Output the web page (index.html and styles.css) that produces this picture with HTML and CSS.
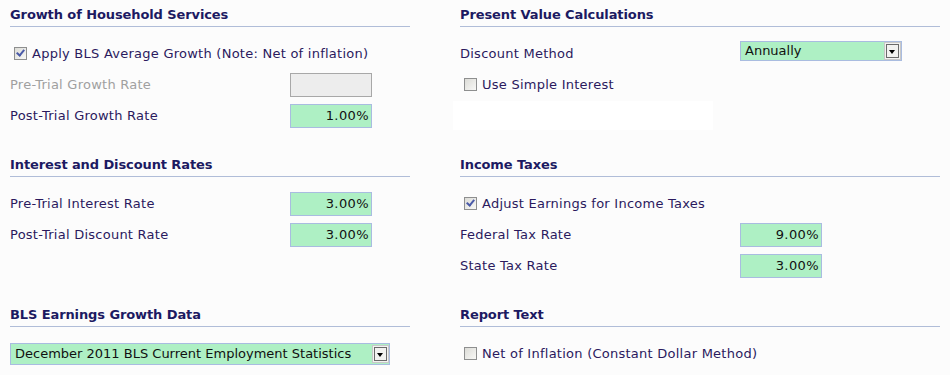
FILE: index.html
```html
<!DOCTYPE html>
<html lang="en">
  <head>
    <meta charset="UTF-8" />
    <meta name="viewport" content="width=device-width, initial-scale=1.0" />
    <title>Assumptions</title>
    <link rel="stylesheet" href="styles.css">
  </head>
  <body>
    <div class="page">
      <div class="section">
        <h2>Growth of Household Services</h2>
        <div class="row">
          <label class="check"><span class="box checked"></span>Apply BLS Average Growth (Note: Net of inflation)</label>
        </div>
        <div class="row">
          <span class="label disabled">Pre-Trial Growth Rate</span>
          <div class="field off"></div>
        </div>
        <div class="row">
          <span class="label">Post-Trial Growth Rate</span>
          <div class="field">1.00%</div>
        </div>
      </div>

      <div class="section">
        <h2>Present Value Calculations</h2>
        <div class="row">
          <span class="label">Discount Method</span>
          <div class="select small"><span class="value">Annually</span><span class="arrow"></span></div>
        </div>
        <div class="row">
          <label class="check"><span class="box"></span>Use Simple Interest</label>
        </div>
        <div class="row">
          <div class="blank"></div>
        </div>
      </div>

      <div class="section">
        <h2>Interest and Discount Rates</h2>
        <div class="row">
          <span class="label">Pre-Trial Interest Rate</span>
          <div class="field">3.00%</div>
        </div>
        <div class="row">
          <span class="label">Post-Trial Discount Rate</span>
          <div class="field">3.00%</div>
        </div>
      </div>

      <div class="section">
        <h2>Income Taxes</h2>
        <div class="row">
          <label class="check"><span class="box checked"></span>Adjust Earnings for Income Taxes</label>
        </div>
        <div class="row">
          <span class="label">Federal Tax Rate</span>
          <div class="field">9.00%</div>
        </div>
        <div class="row">
          <span class="label">State Tax Rate</span>
          <div class="field">3.00%</div>
        </div>
      </div>

      <div class="section last">
        <h2>BLS Earnings Growth Data</h2>
        <div class="row">
          <div class="select wide"><span class="value">December 2011 BLS Current Employment Statistics</span><span class="arrow"></span></div>
        </div>
      </div>

      <div class="section last">
        <h2>Report Text</h2>
        <div class="row">
          <label class="check"><span class="box"></span>Net of Inflation (Constant Dollar Method)</label>
        </div>
      </div>
    </div>
  </body>
</html>
```

FILE: styles.css
```css
body {
  margin: 0;
  padding: 0;
  background-color: #fcfcfc;
  font-family: "DejaVu Sans", Verdana, sans-serif;
  font-size: 13px;
  letter-spacing: 0.25px;
  color: #2b1a5e;
}
.page {
  display: grid;
  grid-template-columns: 400px 480px;
  column-gap: 50px;
  padding-left: 10px;
}
.section {
  height: 150px;
}
.section.last {
  height: auto;
}
h2 {
  margin: 0 0 11px 0;
  padding: 7px 0 3px 0;
  line-height: 16px;
  font-size: 13px;
  font-weight: bold;
  letter-spacing: -0.1px;
  color: #1c1a62;
  border-bottom: 1px solid #b0bdd8;
}
.row {
  display: flex;
  align-items: center;
  height: 31px;
}
.label {
  width: 280px;
}
.label.disabled {
  color: #a0a0a0;
}
.check {
  display: flex;
  align-items: center;
  padding-left: 4px;
}
.box {
  width: 11px;
  height: 11px;
  border: 1px solid #8e8f8f;
  background: linear-gradient(135deg, #dcdcd7, #f8f8f6);
  margin-right: 5px;
  position: relative;
}
.box.checked::after {
  content: "";
  position: absolute;
  left: 3px;
  top: 0px;
  width: 3px;
  height: 6px;
  border: solid #4a5aa8;
  border-width: 0 2px 2px 0;
  transform: rotate(40deg);
}
.field {
  box-sizing: border-box;
  width: 82px;
  height: 24px;
  line-height: 22px;
  padding-right: 2px;
  text-align: right;
  letter-spacing: 0.4px;
  background-color: #aef0c4;
  border: 1px solid #a9bce0;
  color: #111;
}
.field.off {
  background-color: #ededed;
  border-color: #a8a8a8;
}
.select {
  box-sizing: border-box;
  display: flex;
  align-items: center;
  justify-content: space-between;
  height: 20px;
  background-color: #aef0c4;
  border: 1px solid #a9bce0;
  color: #111;
  padding-left: 4px;
  letter-spacing: 0;
}
.select.small {
  width: 162px;
  margin-bottom: 6px;
}
.select.wide {
  width: 380px;
  height: 22px;
}
.arrow {
  box-sizing: border-box;
  width: 17px;
  height: 18px;
  border: 1px solid #c8c8c8;
  outline: 1px solid #6a6a6a;
  outline-offset: -3px;
  background-color: #f2f2f0;
  position: relative;
}
.arrow::after {
  content: "";
  position: absolute;
  left: 4px;
  top: 7px;
  border-left: 3.5px solid transparent;
  border-right: 3.5px solid transparent;
  border-top: 4px solid #000;
}
.blank {
  width: 260px;
  height: 29px;
  margin-left: -7px;
  background-color: #ffffff;
}
```
